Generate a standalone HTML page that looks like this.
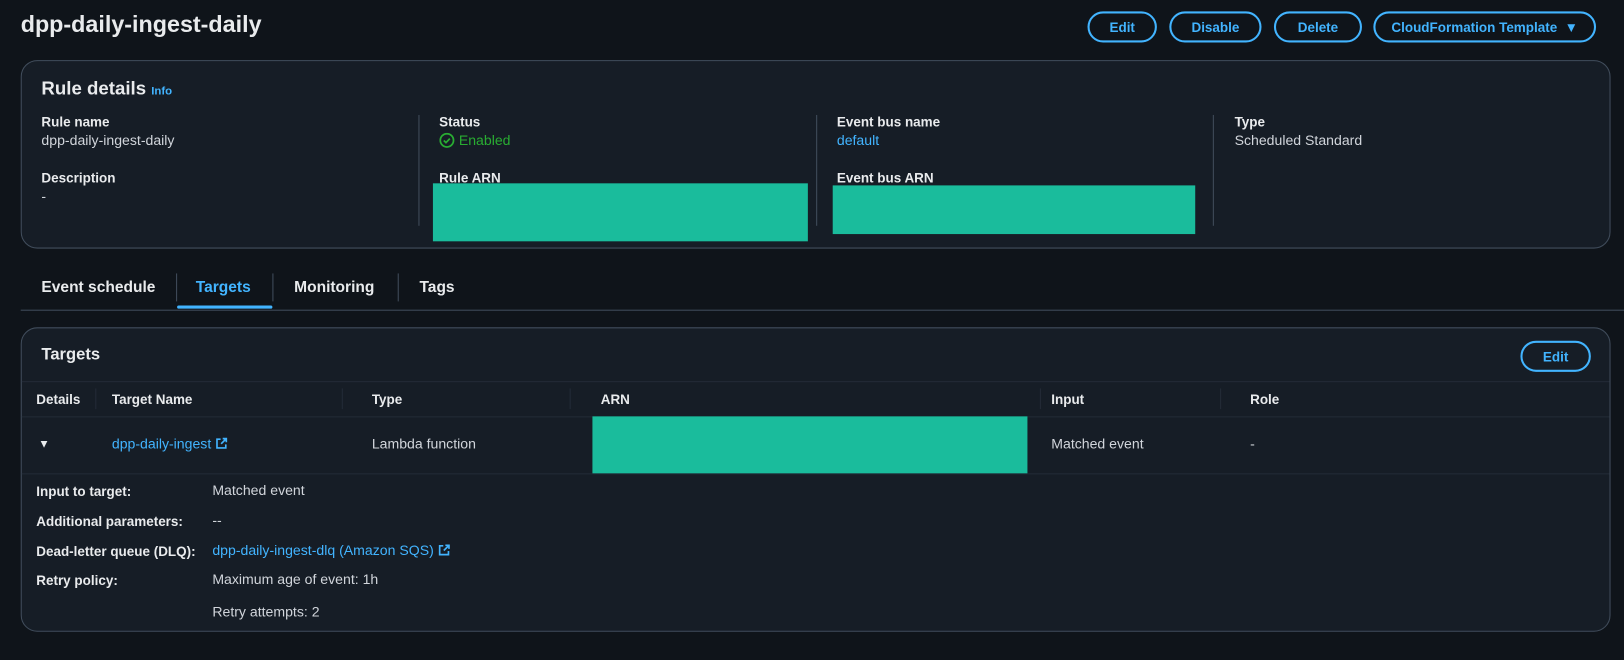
<!DOCTYPE html>
<html><head><meta charset="utf-8"><style>
*{margin:0;padding:0;box-sizing:border-box}
body{width:1624px;height:659px;background:#0f141a;overflow:hidden}
#w{position:absolute;left:0;top:0;width:1568px;height:637px;transform:scale(1.03572);transform-origin:0 0;font-family:"Liberation Sans",sans-serif;color:#d1d5db;font-size:13.6px}
.a{position:absolute;white-space:nowrap}
.b{font-weight:bold;color:#e9ebed;font-size:13px}
.lnk{color:#42b4ff}
.btn{position:absolute;border:2px solid #42b4ff;border-radius:16px;color:#42b4ff;font-weight:bold;font-size:13px;display:flex;align-items:center;justify-content:center}
.card{position:absolute;background:#161d26;border:1px solid #414d5c;border-radius:16px}
.vd{position:absolute;width:1px;background:#414d5c}
.teal{position:absolute;background:#1abc9c}
.hl{position:absolute;height:1px;background:#232b37}
</style></head><body><div id="w">
<div class="a" style="left:20px;top:11px;font-size:22.5px;font-weight:bold;color:#e9ebed">dpp-daily-ingest-daily</div>
<div class="btn" style="left:1050px;top:11px;width:67px;height:30px">Edit</div>
<div class="btn" style="left:1129px;top:11px;width:89px;height:30px">Disable</div>
<div class="btn" style="left:1230px;top:11px;width:85px;height:30px">Delete</div>
<div class="btn" style="left:1326px;top:11px;width:215px;height:30px">CloudFormation Template&nbsp;&nbsp;▼</div>

<div class="card" style="left:20px;top:58px;width:1535px;height:182px"></div>
<div class="a" style="left:40px;top:75px;font-size:18px;font-weight:bold;color:#e9ebed">Rule details <span style="color:#42b4ff;font-size:11px">Info</span></div>
<div class="vd" style="left:404px;top:111px;height:107px"></div>
<div class="vd" style="left:788px;top:111px;height:107px"></div>
<div class="vd" style="left:1171px;top:111px;height:107px"></div>
<div class="a b" style="left:40px;top:110px">Rule name</div>
<div class="a" style="left:40px;top:128px">dpp-daily-ingest-daily</div>
<div class="a b" style="left:40px;top:164px">Description</div>
<div class="a" style="left:40px;top:182px">-</div>
<div class="a b" style="left:424px;top:110px">Status</div>
<div class="a" style="left:424px;top:128px;color:#29ad32;display:flex;align-items:center;gap:4px"><svg width="15" height="15" viewBox="0 0 16 16"><circle cx="8" cy="8" r="6.8" fill="none" stroke="#29ad32" stroke-width="1.8"/><path d="M4.8 8.2l2.2 2.2 4-4.2" fill="none" stroke="#29ad32" stroke-width="1.8"/></svg>Enabled</div>
<div class="a b" style="left:424px;top:164px">Rule ARN</div>
<div class="teal" style="left:418px;top:177px;width:362px;height:56px"></div>
<div class="a b" style="left:808px;top:110px">Event bus name</div>
<div class="a lnk" style="left:808px;top:128px">default</div>
<div class="a b" style="left:808px;top:164px">Event bus ARN</div>
<div class="teal" style="left:804px;top:179px;width:350px;height:47px"></div>
<div class="a b" style="left:1192px;top:110px">Type</div>
<div class="a" style="left:1192px;top:128px">Scheduled Standard</div>

<div class="a b" style="left:40px;top:269px;font-size:15px">Event schedule</div>
<div class="vd" style="left:170px;top:264px;height:27px"></div>
<div class="a b" style="left:189px;top:269px;font-size:15px;color:#42b4ff">Targets</div>
<div class="a" style="left:171px;top:295px;width:92px;height:3px;background:#42b4ff;border-radius:2px"></div>
<div class="vd" style="left:263px;top:264px;height:27px"></div>
<div class="a b" style="left:284px;top:269px;font-size:15px">Monitoring</div>
<div class="vd" style="left:384px;top:264px;height:27px"></div>
<div class="a b" style="left:405px;top:269px;font-size:15px">Tags</div>
<div class="a" style="left:20px;top:299px;width:1548px;height:1px;background:#414d5c"></div>

<div class="card" style="left:20px;top:316px;width:1535px;height:294px"></div>
<div class="a" style="left:40px;top:334px;font-size:16px;font-weight:bold;color:#e9ebed">Targets</div>
<div class="btn" style="left:1468px;top:329px;width:68px;height:30px">Edit</div>
<div class="hl" style="left:21px;top:368px;width:1533px"></div>
<div class="hl" style="left:21px;top:402px;width:1533px"></div>
<div class="hl" style="left:21px;top:457px;width:1533px"></div>
<div class="vd" style="left:92px;top:375px;height:20px;background:#232b37"></div>
<div class="vd" style="left:330px;top:375px;height:20px;background:#232b37"></div>
<div class="vd" style="left:550px;top:375px;height:20px;background:#232b37"></div>
<div class="vd" style="left:1004px;top:375px;height:20px;background:#232b37"></div>
<div class="vd" style="left:1178px;top:375px;height:20px;background:#232b37"></div>
<div class="a b" style="left:35px;top:378px">Details</div>
<div class="a b" style="left:108px;top:378px">Target Name</div>
<div class="a b" style="left:359px;top:378px">Type</div>
<div class="a b" style="left:580px;top:378px">ARN</div>
<div class="a b" style="left:1015px;top:378px">Input</div>
<div class="a b" style="left:1207px;top:378px">Role</div>
<div class="a" style="left:37px;top:423px;font-size:11px;color:#e9ebed">▼</div>
<div class="a lnk" style="left:108px;top:421px">dpp-daily-ingest <svg width="12" height="12" viewBox="0 0 12 12" style="vertical-align:-1px"><path d="M5 2H1.5v8.5H10V7M7 1.5h3.5V5M10.5 1.5 5.5 6.5" fill="none" stroke="#42b4ff" stroke-width="1.6"/></svg></div>
<div class="a" style="left:359px;top:421px">Lambda function</div>
<div class="teal" style="left:572px;top:402px;width:420px;height:55px"></div>
<div class="a" style="left:1015px;top:421px">Matched event</div>
<div class="a" style="left:1207px;top:421px">-</div>
<div class="a b" style="left:35px;top:467px">Input to target:</div>
<div class="a" style="left:205px;top:466px">Matched event</div>
<div class="a b" style="left:35px;top:496px">Additional parameters:</div>
<div class="a" style="left:205px;top:495px">--</div>
<div class="a b" style="left:35px;top:525px">Dead-letter queue (DLQ):</div>
<div class="a lnk" style="left:205px;top:524px">dpp-daily-ingest-dlq (Amazon SQS) <svg width="12" height="12" viewBox="0 0 12 12" style="vertical-align:-1px"><path d="M5 2H1.5v8.5H10V7M7 1.5h3.5V5M10.5 1.5 5.5 6.5" fill="none" stroke="#42b4ff" stroke-width="1.6"/></svg></div>
<div class="a b" style="left:35px;top:553px">Retry policy:</div>
<div class="a" style="left:205px;top:552px">Maximum age of event: 1h</div>
<div class="a" style="left:205px;top:583px">Retry attempts: 2</div>
</div></body></html>
